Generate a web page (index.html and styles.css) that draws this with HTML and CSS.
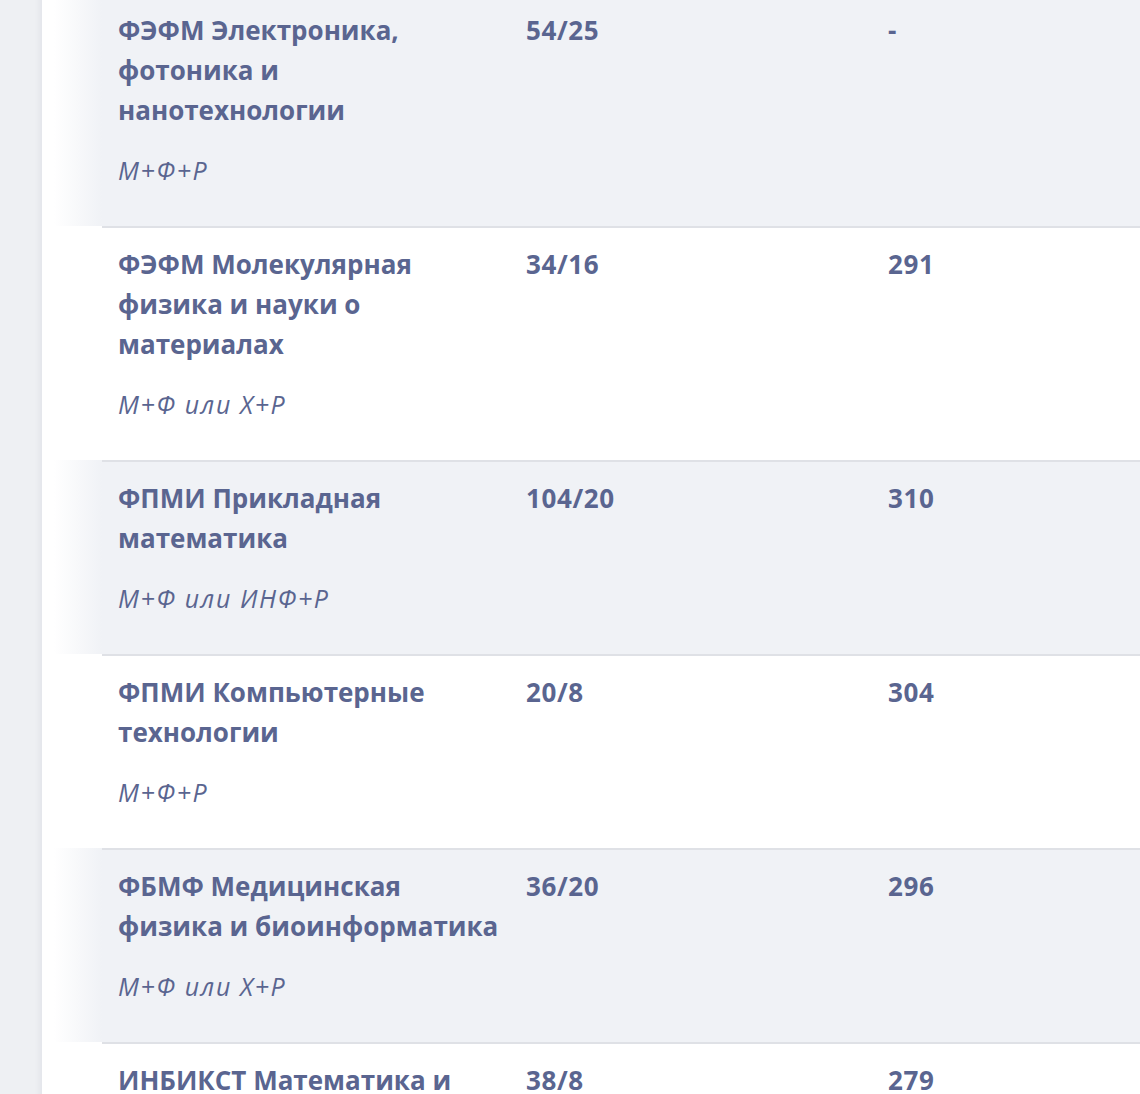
FILE: index.html
```html
<!DOCTYPE html>
<html lang="ru">
<head>
<meta charset="utf-8">
<link rel="stylesheet" href="styles.css">
</head>
<body>
<div class="page">
  <div class="card">
    <div class="table">
      <div class="row gray first">
        <div class="lead"></div>
        <div class="cell name"><div class="title">ФЭФМ Электроника, фотоника и нанотехнологии</div><div class="exams">М+Ф+Р</div></div>
        <div class="cell num">54/25</div>
        <div class="cell num">-</div>
      </div>
      <div class="row white">
        <div class="lead"></div>
        <div class="cell name"><div class="title">ФЭФМ Молекулярная физика и науки о материалах</div><div class="exams">М+Ф или Х+Р</div></div>
        <div class="cell num">34/16</div>
        <div class="cell num">291</div>
      </div>
      <div class="row gray">
        <div class="lead"></div>
        <div class="cell name"><div class="title">ФПМИ Прикладная математика</div><div class="exams">М+Ф или ИНФ+Р</div></div>
        <div class="cell num">104/20</div>
        <div class="cell num">310</div>
      </div>
      <div class="row white">
        <div class="lead"></div>
        <div class="cell name"><div class="title">ФПМИ Компьютерные технологии</div><div class="exams">М+Ф+Р</div></div>
        <div class="cell num">20/8</div>
        <div class="cell num">304</div>
      </div>
      <div class="row gray">
        <div class="lead"></div>
        <div class="cell name"><div class="title">ФБМФ Медицинская физика и биоинформатика</div><div class="exams">М+Ф или Х+Р</div></div>
        <div class="cell num">36/20</div>
        <div class="cell num">296</div>
      </div>
      <div class="row white">
        <div class="lead"></div>
        <div class="cell name"><div class="title">ИНБИКСТ Математика и физика</div><div class="exams">М+Ф+Р</div></div>
        <div class="cell num">38/8</div>
        <div class="cell num">279</div>
      </div>
    </div>
  </div>
</div>
</body>
</html>
```

FILE: styles.css
```css
* { box-sizing: border-box; }
html, body { margin: 0; padding: 0; }
body {
  background: #eef0f3;
  font-family: "Open Sans", "Noto Sans", sans-serif;
  color: #5a6590;
  overflow: hidden;
  height: 1094px;
}
.page {
  padding-left: 42px;
  margin-top: -8px;
}
.card {
  background: #ffffff;
  box-shadow: -3px 0 5px rgba(60, 70, 100, 0.06);
}
.table { display: flex; flex-direction: column; }
.row {
  display: grid;
  grid-template-columns: 60px 408px 362px 1fr;
}
.row.gray .cell { background: #f0f2f6; }
.row.white .cell { background: #ffffff; }
.row.gray .lead { background: linear-gradient(to right, #ffffff 20%, #f0f2f6 100%); }
.row.white .lead { background: #ffffff; }
.cell {
  border-top: 2px solid #dfe1e6;
  padding: 16px 16px 36px 16px;
  font-size: 26px;
  line-height: 40px;
  font-weight: 700;
}
.cell.name { padding-right: 0; }
.row.first .cell { border-top-color: transparent; }
.title { letter-spacing: 0; }
.exams {
  margin-top: 20px;
  font-size: 25px;
  line-height: 40px;
  font-weight: 400;
  font-style: italic;
  letter-spacing: 1.6px;
}
.num { letter-spacing: 0.6px; }
```
